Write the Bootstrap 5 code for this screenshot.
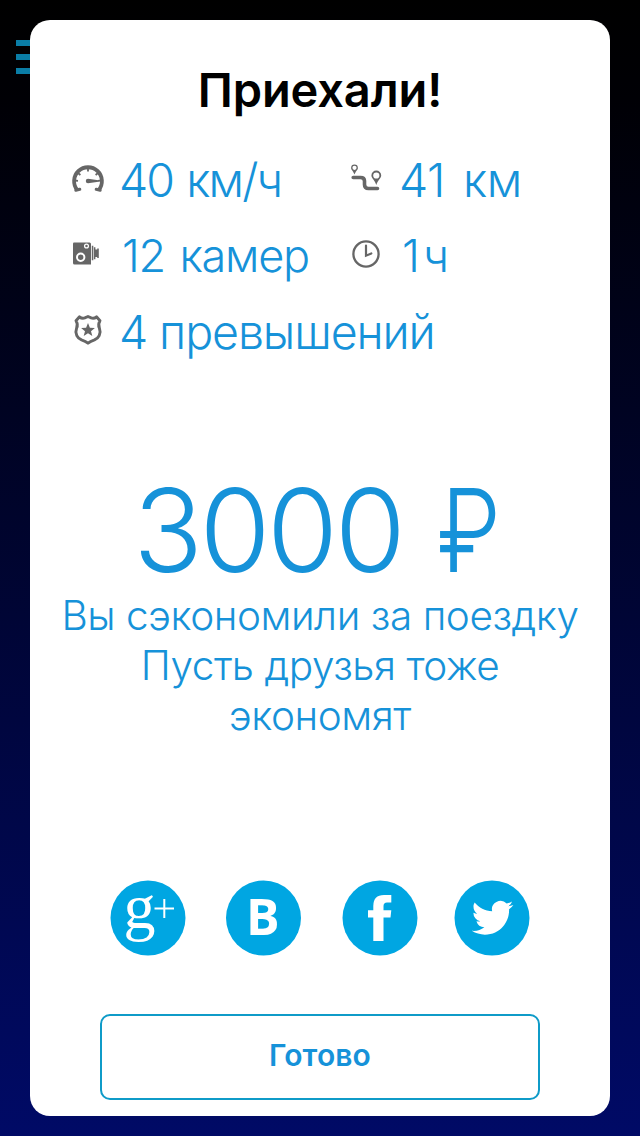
<!DOCTYPE html>
<html lang="ru">
<head>
<meta charset="utf-8">
<meta name="viewport" content="width=device-width, initial-scale=1">
<title>Приехали!</title>
<link href="https://cdn.jsdelivr.net/npm/bootstrap@5.3.0/dist/css/bootstrap.min.css" rel="stylesheet">
<style>
  body { font-family: Inter, "Liberation Sans", sans-serif; color: #1692d9; }
  .screen { height: 1136px; padding: 20px 30px; background: linear-gradient(#000 0, #000005 100px, #000a66 1136px); }
  .menu-bars { left: 16px; top: 40px; width: 36px; height: 34px;
    background: repeating-linear-gradient(#0a7da6 0 6px, transparent 6px 14px); }
  .sheet { border-radius: 20px; }
  .title { font-size: 47px; line-height: 60px; font-weight: 600; color: #000; margin-top: 40px; letter-spacing: -.1px; }
  .stats { margin: 22px 0 0 40px; display: grid; grid-template-columns: 280px 1fr; grid-auto-rows: 76px; }
  .stat { font-size: 46.5px; line-height: 76px; font-weight: 300; white-space: nowrap; }
  .stat svg { width: 36px; height: 36px; margin-right: 14px; flex: none; }
  .speed { letter-spacing: -1.9px; word-spacing: 2px; margin-left: -1px; }
  .distance { letter-spacing: -.6px; word-spacing: 6px; margin-left: -1px; }
  .cameras { font-size: 45px; letter-spacing: -1.2px; word-spacing: 3px; margin-left: 2px; }
  .duration { font-size: 45.5px; letter-spacing: 3px; margin-left: 2px; }
  .violations { letter-spacing: -1.1px; margin-left: -1px; }
  .wide { grid-column: 1 / 3; }
  .amount { font-size: 115px; line-height: 120px; font-weight: 300; margin-top: 101px; padding-right: 8px; white-space: nowrap; letter-spacing: -3.4px; }
  .ruble { display: inline-block; transform: scaleX(.83); transform-origin: 0 50%; margin: 0 -12px 0 6px; }
  .note { font-size: 40.5px; line-height: 50px; font-weight: 300; white-space: nowrap; letter-spacing: -.45px; }
  .share { margin: 139px 80px 0; gap: 40px; }
  .share a, .share svg { display: block; width: 76px; height: 76px; }
  .share svg { overflow: visible; }
  .share a:nth-child(3) { margin-right: -4px; }
  .glyph-g { font: 400 64px "Liberation Serif", "Times New Roman", serif; }
  .done { margin: 58px 70px 0; height: 86px; border: 2px solid #0f9bc8; border-radius: 10px;
    color: #1692d9; font-size: 30px; font-weight: 600; letter-spacing: .1px; }
</style>
</head>
<body>
<div class="screen position-relative">
  <div class="menu-bars position-absolute"></div>
  <main class="sheet bg-white h-100 d-flex flex-column position-relative">
    <h1 class="title text-center mb-0">Приехали!</h1>

    <div class="stats">
      <div class="stat d-flex align-items-center">
        <svg viewBox="0 0 36 36"><g fill="none" stroke="#666"><path d="M7.300 28A13.900 13.900 0 1 1 28.700 28" stroke-width="3.800"/><path d="M5.800 28.300l4-1M30.200 28.300l-4-1" stroke-width="3" stroke-linecap="round"/><path d="M18 5v4.500M8 11l2.400 2M28 11l-2.400 2M5 18.500l3 .4M31 18.500l-3 .4" stroke-width="1.800"/></g><path d="M18 16.800L28.500 18.300v1.400L18 21.200a2.200 2.200 0 0 1 0-4.400z" fill="#666"/></svg>
        <span class="speed">40 км/ч</span></div>
      <div class="stat d-flex align-items-center">
        <svg viewBox="0 0 36 36"><path d="M3.200 15.500H10.500Q14.500 15.500 14.500 19V22.500Q14.500 26.500 18.500 26.500H27.500" fill="none" stroke="#666" stroke-width="3.600" stroke-linecap="round"/><g fill="#666" fill-rule="evenodd"><path d="M4.500 2.500a3.400 3.400 0 0 1 3.400 3.400C7.900 8 5.500 9 4.500 12.500 3.500 9 1.100 8 1.100 5.900A3.400 3.400 0 0 1 4.500 2.500zm0 1.200a2.100 2.100 0 1 0 0 4.200 2.100 2.100 0 0 0 0-4.200z"/><path d="M26.300 8.500a4.900 4.900 0 0 1 4.900 4.900C31.200 16.500 27.500 18 26.300 23 25.100 18 21.400 16.500 21.400 13.400A4.900 4.900 0 0 1 26.300 8.500zm0 1.900a3.100 3.100 0 1 0 0 6.200 3.100 3.100 0 0 0 0-6.200z"/></g></svg>
        <span class="distance">41 км</span></div>
      <div class="stat d-flex align-items-center">
        <svg viewBox="0 0 36 36"><path d="M4 4.500H19.500Q21 4.500 21 6V26.500H4.500Q3 26.500 3 25V5.500Q3 4.500 4 4.500z" fill="#666"/><circle cx="10.700" cy="19.200" r="3.700" fill="none" stroke="#fff" stroke-width="2"/><circle cx="16.500" cy="8" r="1.900" fill="none" stroke="#fff" stroke-width="1.300"/><path d="M21.800 7.800h1.500v14.500h-1.500zM23.900 9.300h1.500v12h-1.500zM25.400 11.500h1.800v-1h1.600v9.500h-1.600v-1h-1.800z" fill="#666"/></svg>
        <span class="cameras">12 камер</span></div>
      <div class="stat d-flex align-items-center">
        <svg viewBox="0 0 36 36"><circle cx="16" cy="16" r="12.600" fill="none" stroke="#666" stroke-width="2.300"/><path d="M16 7.500v10.200l5.300-2.200" fill="none" stroke="#666" stroke-width="2.200" stroke-linecap="round"/></svg>
        <span class="duration">1ч</span></div>
      <div class="stat wide d-flex align-items-center">
        <svg viewBox="0 0 36 36"><path d="M9.500 2.800Q12 5 14.800 3.900L18 2.500l3.200 1.400Q24 5 26.500 2.800l3.500 4q-2.400 3.600-.6 7.300 1.500 3.800-.2 7.500-1.400 3-4.700 4.300-4.300 1.400-6.500 3.300-2.200-1.900-6.500-3.300-3.300-1.300-4.700-4.300-1.700-3.700-.2-7.500 1.800-3.700-.6-7.300z" fill="none" stroke="#666" stroke-width="2.900" stroke-linejoin="round"/><path d="M18 9l1.900 4.700 5 .3-3.900 3.200 1.300 4.800-4.300-2.700-4.300 2.700 1.300-4.800-3.900-3.200 5-.3z" fill="#666"/></svg>
        <span class="violations">4 превышений</span></div>
    </div>

    <div class="amount text-center">3000 <span class="ruble">₽</span></div>
    <div class="note text-center"><div>Вы сэкономили за поездку</div><div>Пусть друзья тоже</div><div>экономят</div></div>

    <div class="share d-flex">
      <a href="#" aria-label="Google+"><svg viewBox="0 0 76 76"><circle cx="38" cy="38" r="37.500" fill="#00a6e2"/><text class="glyph-g" x="13.500" y="47.500" fill="#fff">g</text><path d="M44.500 28.500H64M54.300 19V38" stroke="#fff" stroke-width="2"/></svg></a>
      <a href="#" aria-label="ВКонтакте"><svg viewBox="0 0 76 76"><circle cx="37.500" cy="38" r="37.500" fill="#00a6e2"/><text x="20" y="55.300" font-family="Open Sans, sans-serif" font-weight="700" font-size="50" fill="#fff">B</text></svg></a>
      <a href="#" aria-label="Facebook"><svg viewBox="0 0 76 76"><circle cx="38" cy="38" r="37.500" fill="#00a6e2"/><path d="M31.300 61V37.500H26V30.200H31.300V26Q31.300 15 42 15H49.300V22.500H45Q41.500 22.500 41.500 26V30.200H49.300L48.500 37.500H41.500V61z" fill="#fff"/></svg></a>
      <a href="#" aria-label="Twitter"><svg viewBox="0 0 76 76"><circle cx="38" cy="38" r="37.500" fill="#00a6e2"/><path transform="translate(17.800 17) scale(1.730)" fill="#fff" d="M23.953 4.570a10 10 0 01-2.825.775 4.958 4.958 0 002.163-2.723c-.951.555-2.005.959-3.127 1.184a4.920 4.920 0 00-8.384 4.482C7.690 8.095 4.067 6.130 1.640 3.162a4.822 4.822 0 00-.666 2.475c0 1.710.870 3.213 2.188 4.096a4.904 4.904 0 01-2.228-.616v.060a4.923 4.923 0 003.946 4.827 4.996 4.996 0 01-2.212.085 4.936 4.936 0 004.604 3.417 9.867 9.867 0 01-6.102 2.105c-.390 0-.779-.023-1.170-.067a13.995 13.995 0 007.557 2.209c9.053 0 13.998-7.496 13.998-13.985 0-.210 0-.420-.015-.630A9.935 9.935 0 0024 4.590z"/></svg></a>
    </div>

    <button type="button" class="done btn p-0 pb-1">Готово</button>
  </main>
</div>
<script src="https://cdn.jsdelivr.net/npm/bootstrap@5.3.0/dist/js/bootstrap.bundle.min.js"></script>
</body>
</html>
